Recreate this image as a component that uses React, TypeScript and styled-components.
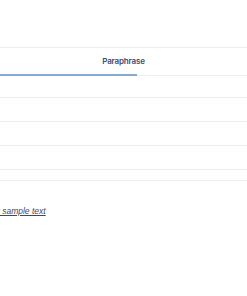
import React from "react";
import styled, { createGlobalStyle } from "styled-components";

const Global = createGlobalStyle`
  html, body { margin: 0; padding: 0; background: #ffffff; }
  body { font-family: Inter, "Noto Sans", Arial, sans-serif; overflow: hidden; }
`;

const Page = styled.div`
  width: 247px;
  height: 296px;
  display: flex;
  flex-direction: column;
  padding-top: 47px;
  box-sizing: border-box;
  overflow: hidden;
`;

const TabBar = styled.div`
  position: relative;
  height: 29px;
  border-top: 1px solid #eeeeee;
  border-bottom: 1px solid #eeeeee;
  box-sizing: border-box;
  display: flex;
  align-items: center;
  justify-content: center;
`;

const TabLabel = styled.span`
  font-size: 8px;
  font-weight: 600;
  color: #3b4a7e;
  letter-spacing: -0.15px;
  margin-top: -1px;
`;

const Indicator = styled.div<{ $width: number }>`
  position: absolute;
  left: 0;
  bottom: -1px;
  height: 2px;
  width: ${(p) => p.$width}px;
  background: #86a9cf;
`;

const Row = styled.div<{ $h: number }>`
  height: ${(p) => p.$h}px;
  border-bottom: 1px solid #ececec;
  flex-shrink: 0;
`;

const SampleWrap = styled.div`
  margin-top: 25px;
  display: flex;
`;

const SampleLink = styled.a`
  font-size: 8.5px;
  font-style: italic;
  color: #3f4668;
  text-decoration: underline;
  text-underline-offset: 1px;
  white-space: nowrap;
  margin-left: -26.5px;
  font-family: "Liberation Sans", Arial, sans-serif;
`;

export default function App() {
  const rows = [21, 23, 23, 23, 10];
  return (
    <>
      <Global />
      <Page>
        <TabBar>
          <TabLabel>Paraphrase</TabLabel>
          <Indicator $width={137} />
        </TabBar>
        {rows.map((h, i) => (
          <Row key={i} $h={h} />
        ))}
        <SampleWrap>
          <SampleLink href="#">Try our sample text</SampleLink>
        </SampleWrap>
      </Page>
    </>
  );
}
